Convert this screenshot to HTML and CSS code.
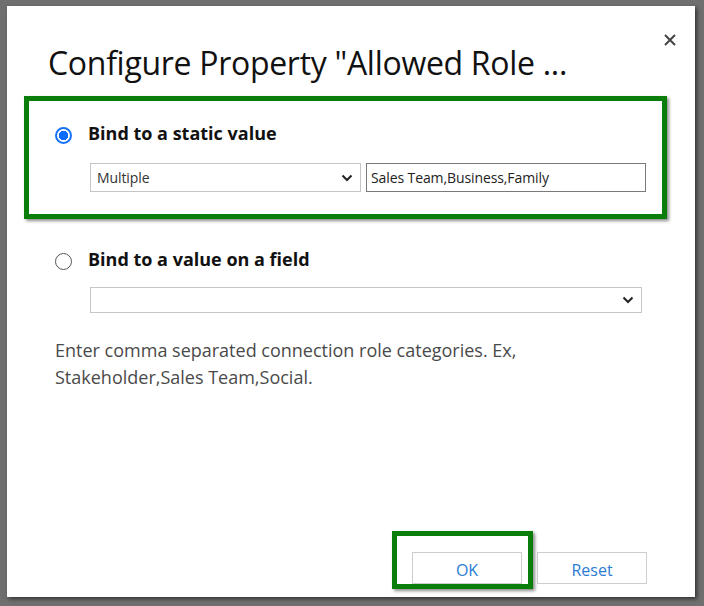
FILE: index.html
```html
<!DOCTYPE html>
<html>
<head>
<meta charset="utf-8">
<link rel="stylesheet" href="styles.css">
</head>
<body>
<div class="backdrop">
  <div class="dialog">
    <div class="header">
      <h1 class="title">Configure Property "Allowed Role ...</h1>
      <button class="close" aria-label="Close">
        <svg width="12" height="12" viewBox="0 0 12 12"><path d="M1 1L11 11M11 1L1 11" stroke="#444" stroke-width="2" fill="none"/></svg>
      </button>
    </div>

    <div class="highlight option-box">
      <div class="option-row">
        <span class="radio radio-on"></span>
        <span class="option-label">Bind to a static value</span>
      </div>
      <div class="field-row">
        <div class="select select-small">
          <span class="select-text">Multiple</span>
          <svg class="chev" width="12" height="8" viewBox="0 0 12 8"><path d="M1.5 1.5L6 6L10.5 1.5" stroke="#222" stroke-width="2" fill="none"/></svg>
        </div>
        <div class="text-input">Sales Team,Business,Family</div>
      </div>
    </div>

    <div class="option-plain">
      <div class="option-row">
        <span class="radio"></span>
        <span class="option-label">Bind to a value on a field</span>
      </div>
      <div class="field-row">
        <div class="select select-wide">
          <span class="select-text"></span>
          <svg class="chev" width="12" height="8" viewBox="0 0 12 8"><path d="M1.5 1.5L6 6L10.5 1.5" stroke="#222" stroke-width="2" fill="none"/></svg>
        </div>
      </div>
    </div>

    <p class="help">Enter comma separated connection role categories. Ex,<br>Stakeholder,Sales Team,Social.</p>

    <div class="footer">
      <div class="highlight ok-wrap">
        <button class="btn">OK</button>
      </div>
      <button class="btn btn-reset">Reset</button>
    </div>
  </div>
</div>
</body>
</html>
```

FILE: styles.css
```css
html, body {
  margin: 0;
  padding: 0;
}
body {
  width: 704px;
  height: 606px;
  overflow: hidden;
  background: #6f6f6f;
  font-family: "Open Sans", "Noto Sans", sans-serif;
}
.backdrop {
  padding: 6px 0 0 7px;
}
.dialog {
  width: 688px;
  height: 591px;
  background: #fff;
  box-shadow: 2px 2px 4px rgba(0, 0, 0, 0.55);
  display: flex;
  flex-direction: column;
  box-sizing: border-box;
  padding-bottom: 8px;
}
.header {
  display: flex;
  justify-content: space-between;
  align-items: flex-start;
  padding: 0 19px 0 41px;
  height: 90px;
}
.title {
  margin: 37px 0 0 0;
  font-size: 32px;
  font-weight: 400;
  line-height: 40px;
  color: #111;
  letter-spacing: -0.3px;
  white-space: nowrap;
}
.close {
  margin-top: 28px;
  width: 12px;
  height: 12px;
  padding: 0;
  border: 0;
  background: transparent;
  display: flex;
}
.highlight {
  border: 5px solid #0a7d0a;
  box-shadow: 2px 2px 3px rgba(0, 0, 0, 0.45);
}
.option-box {
  margin-left: 17px;
  width: 643px;
  height: 123px;
  box-sizing: border-box;
  padding: 25px 0 0 26px;
}
.option-plain {
  padding: 33px 0 0 48px;
}
.option-row {
  display: flex;
  align-items: center;
  height: 18px;
  gap: 16px;
}
.radio {
  width: 17px;
  height: 17px;
  box-sizing: border-box;
  border: 1px solid #555;
  border-radius: 50%;
  flex: none;
}
.radio-on {
  border: 2px solid #1a73f5;
  background: radial-gradient(circle, #0a6cff 0 4.5px, #fff 5px);
}
.option-label {
  font-size: 18px;
  font-weight: 700;
  color: #111;
  letter-spacing: 0;
  margin-top: -4px;
}
.field-row {
  display: flex;
  gap: 5px;
  margin-left: 35px;
  margin-top: 19px;
}
.option-plain .field-row {
  margin-top: 17px;
}
.select {
  box-sizing: border-box;
  border: 1px solid #c6c6c6;
  display: flex;
  align-items: center;
  justify-content: space-between;
  padding: 0 7px 0 6px;
}
.select-small {
  width: 271px;
  height: 29px;
}
.select-wide {
  width: 552px;
  height: 26px;
}
.select-text, .text-input {
  font-size: 14px;
  color: #333;
  letter-spacing: -0.1px;
}
.text-input {
  box-sizing: border-box;
  width: 280px;
  height: 29px;
  border: 1px solid #7a7a7a;
  padding: 0 4px;
  display: flex;
  align-items: center;
  color: #222;
}
.help {
  margin: 24px 0 0 48px;
  font-size: 18px;
  line-height: 27px;
  color: #4a4a4a;
  letter-spacing: 0;
}
.footer {
  margin-top: auto;
  display: flex;
  align-items: flex-end;
  padding-left: 385px;
}
.ok-wrap {
  padding: 16px 6px 0 15px;
}
.btn {
  width: 110px;
  height: 32px;
  box-sizing: border-box;
  border: 1px solid #cdcdcd;
  background: #fff;
  color: #2b7cd3;
  font-family: "Open Sans", "Noto Sans", sans-serif;
  font-size: 16px;
  padding: 3px 0 0 0;
  display: block;
}
.btn-reset {
  margin: 0 0 5px 4px;
}
```
